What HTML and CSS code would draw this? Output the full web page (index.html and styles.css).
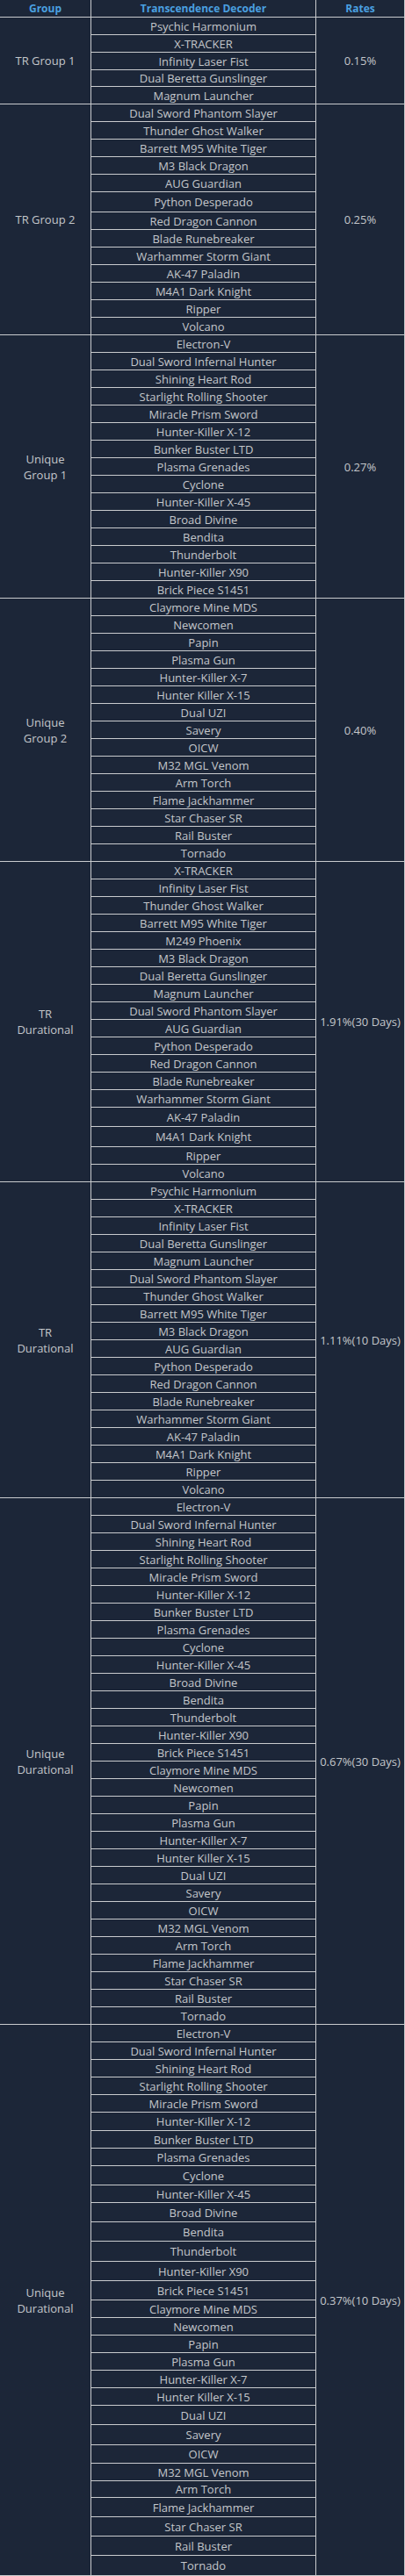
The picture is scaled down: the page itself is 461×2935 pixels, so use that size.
FILE: index.html
```html
<!DOCTYPE html>
<html lang="en">
<head>
<meta charset="utf-8">
<title>Transcendence Decoder Rates</title>
<link rel="stylesheet" href="styles.css">
</head>
<body>
<table class="rates">
  <thead>
    <tr class="head">
      <th class="c-group">Group</th>
      <th class="c-item">Transcendence Decoder</th>
      <th class="c-rate">Rates</th>
    </tr>
  </thead>
  <tbody>
    <tr><td class="grp" rowspan="5">TR Group 1</td><td>Psychic Harmonium</td><td class="rate" rowspan="5">0.15%</td></tr>
    <tr><td>X-TRACKER</td></tr>
    <tr><td>Infinity Laser Fist</td></tr>
    <tr class="r19"><td>Dual Beretta Gunslinger</td></tr>
    <tr><td>Magnum Launcher</td></tr>

    <tr><td class="grp" rowspan="13">TR Group 2</td><td>Dual Sword Phantom Slayer</td><td class="rate" rowspan="13">0.25%</td></tr>
    <tr><td>Thunder Ghost Walker</td></tr>
    <tr><td>Barrett M95 White Tiger</td></tr>
    <tr><td>M3 Black Dragon</td></tr>
    <tr><td>AUG Guardian</td></tr>
    <tr class="r23"><td>Python Desperado</td></tr>
    <tr><td>Red Dragon Cannon</td></tr>
    <tr><td>Blade Runebreaker</td></tr>
    <tr><td>Warhammer Storm Giant</td></tr>
    <tr><td>AK-47 Paladin</td></tr>
    <tr><td>M4A1 Dark Knight</td></tr>
    <tr><td>Ripper</td></tr>
    <tr><td>Volcano</td></tr>

    <tr><td class="grp" rowspan="15">Unique<br>Group 1</td><td>Electron-V</td><td class="rate" rowspan="15">0.27%</td></tr>
    <tr><td>Dual Sword Infernal Hunter</td></tr>
    <tr><td>Shining Heart Rod</td></tr>
    <tr><td>Starlight Rolling Shooter</td></tr>
    <tr><td>Miracle Prism Sword</td></tr>
    <tr><td>Hunter-Killer X-12</td></tr>
    <tr><td>Bunker Buster LTD</td></tr>
    <tr><td>Plasma Grenades</td></tr>
    <tr><td>Cyclone</td></tr>
    <tr><td>Hunter-Killer X-45</td></tr>
    <tr><td>Broad Divine</td></tr>
    <tr><td>Bendita</td></tr>
    <tr><td>Thunderbolt</td></tr>
    <tr><td>Hunter-Killer X90</td></tr>
    <tr><td>Brick Piece S1451</td></tr>

    <tr><td class="grp" rowspan="15">Unique<br>Group 2</td><td>Claymore Mine MDS</td><td class="rate" rowspan="15">0.40%</td></tr>
    <tr><td>Newcomen</td></tr>
    <tr><td>Papin</td></tr>
    <tr><td>Plasma Gun</td></tr>
    <tr><td>Hunter-Killer X-7</td></tr>
    <tr><td>Hunter Killer X-15</td></tr>
    <tr><td>Dual UZI</td></tr>
    <tr><td>Savery</td></tr>
    <tr><td>OICW</td></tr>
    <tr><td>M32 MGL Venom</td></tr>
    <tr><td>Arm Torch</td></tr>
    <tr><td>Flame Jackhammer</td></tr>
    <tr><td>Star Chaser SR</td></tr>
    <tr><td>Rail Buster</td></tr>
    <tr><td>Tornado</td></tr>

    <tr><td class="grp" rowspan="18">TR<br>Durational</td><td>X-TRACKER</td><td class="rate" rowspan="18">1.91%(30 Days)</td></tr>
    <tr><td>Infinity Laser Fist</td></tr>
    <tr><td>Thunder Ghost Walker</td></tr>
    <tr><td>Barrett M95 White Tiger</td></tr>
    <tr><td>M249 Phoenix</td></tr>
    <tr><td>M3 Black Dragon</td></tr>
    <tr><td>Dual Beretta Gunslinger</td></tr>
    <tr><td>Magnum Launcher</td></tr>
    <tr><td>Dual Sword Phantom Slayer</td></tr>
    <tr><td>AUG Guardian</td></tr>
    <tr><td>Python Desperado</td></tr>
    <tr><td>Red Dragon Cannon</td></tr>
    <tr><td>Blade Runebreaker</td></tr>
    <tr><td>Warhammer Storm Giant</td></tr>
    <tr class="r22"><td>AK-47 Paladin</td></tr>
    <tr class="r23"><td>M4A1 Dark Knight</td></tr>
    <tr><td>Ripper</td></tr>
    <tr><td>Volcano</td></tr>

    <tr><td class="grp" rowspan="18">TR<br>Durational</td><td>Psychic Harmonium</td><td class="rate" rowspan="18">1.11%(10 Days)</td></tr>
    <tr><td>X-TRACKER</td></tr>
    <tr><td>Infinity Laser Fist</td></tr>
    <tr><td>Dual Beretta Gunslinger</td></tr>
    <tr><td>Magnum Launcher</td></tr>
    <tr><td>Dual Sword Phantom Slayer</td></tr>
    <tr><td>Thunder Ghost Walker</td></tr>
    <tr><td>Barrett M95 White Tiger</td></tr>
    <tr><td>M3 Black Dragon</td></tr>
    <tr><td>AUG Guardian</td></tr>
    <tr><td>Python Desperado</td></tr>
    <tr><td>Red Dragon Cannon</td></tr>
    <tr><td>Blade Runebreaker</td></tr>
    <tr><td>Warhammer Storm Giant</td></tr>
    <tr><td>AK-47 Paladin</td></tr>
    <tr><td>M4A1 Dark Knight</td></tr>
    <tr><td>Ripper</td></tr>
    <tr><td>Volcano</td></tr>

    <tr><td class="grp" rowspan="30">Unique<br>Durational</td><td>Electron-V</td><td class="rate" rowspan="30">0.67%(30 Days)</td></tr>
    <tr><td>Dual Sword Infernal Hunter</td></tr>
    <tr><td>Shining Heart Rod</td></tr>
    <tr><td>Starlight Rolling Shooter</td></tr>
    <tr><td>Miracle Prism Sword</td></tr>
    <tr><td>Hunter-Killer X-12</td></tr>
    <tr><td>Bunker Buster LTD</td></tr>
    <tr><td>Plasma Grenades</td></tr>
    <tr><td>Cyclone</td></tr>
    <tr><td>Hunter-Killer X-45</td></tr>
    <tr><td>Broad Divine</td></tr>
    <tr><td>Bendita</td></tr>
    <tr><td>Thunderbolt</td></tr>
    <tr><td>Hunter-Killer X90</td></tr>
    <tr><td>Brick Piece S1451</td></tr>
    <tr><td>Claymore Mine MDS</td></tr>
    <tr><td>Newcomen</td></tr>
    <tr><td>Papin</td></tr>
    <tr><td>Plasma Gun</td></tr>
    <tr><td>Hunter-Killer X-7</td></tr>
    <tr><td>Hunter Killer X-15</td></tr>
    <tr><td>Dual UZI</td></tr>
    <tr><td>Savery</td></tr>
    <tr><td>OICW</td></tr>
    <tr><td>M32 MGL Venom</td></tr>
    <tr><td>Arm Torch</td></tr>
    <tr><td>Flame Jackhammer</td></tr>
    <tr><td>Star Chaser SR</td></tr>
    <tr><td>Rail Buster</td></tr>
    <tr><td>Tornado</td></tr>

    <tr><td class="grp" rowspan="30">Unique<br>Durational</td><td>Electron-V</td><td class="rate" rowspan="30">0.37%(10 Days)</td></tr>
    <tr><td>Dual Sword Infernal Hunter</td></tr>
    <tr><td>Shining Heart Rod</td></tr>
    <tr><td>Starlight Rolling Shooter</td></tr>
    <tr><td>Miracle Prism Sword</td></tr>
    <tr class="r21"><td>Hunter-Killer X-12</td></tr>
    <tr><td>Bunker Buster LTD</td></tr>
    <tr><td>Plasma Grenades</td></tr>
    <tr class="r22"><td>Cyclone</td></tr>
    <tr><td>Hunter-Killer X-45</td></tr>
    <tr class="r22"><td>Broad Divine</td></tr>
    <tr class="r22"><td>Bendita</td></tr>
    <tr class="r23"><td>Thunderbolt</td></tr>
    <tr class="r22"><td>Hunter-Killer X90</td></tr>
    <tr class="r22"><td>Brick Piece S1451</td></tr>
    <tr><td>Claymore Mine MDS</td></tr>
    <tr><td>Newcomen</td></tr>
    <tr><td>Papin</td></tr>
    <tr><td>Plasma Gun</td></tr>
    <tr><td>Hunter-Killer X-7</td></tr>
    <tr><td>Hunter Killer X-15</td></tr>
    <tr class="r22"><td>Dual UZI</td></tr>
    <tr class="r23"><td>Savery</td></tr>
    <tr class="r21"><td>OICW</td></tr>
    <tr><td>M32 MGL Venom</td></tr>
    <tr class="r19"><td>Arm Torch</td></tr>
    <tr class="r22"><td>Flame Jackhammer</td></tr>
    <tr class="r22"><td>Star Chaser SR</td></tr>
    <tr class="r22"><td>Rail Buster</td></tr>
    <tr class="r23"><td>Tornado</td></tr>
  </tbody>
</table>
</body>
</html>
```
FILE: styles.css
```css
html, body {
  margin: 0;
  padding: 0;
  background: #1c2638;
}

.rates {
  border-collapse: separate;
  border-spacing: 0;
  table-layout: fixed;
  width: 461px;
  background: #1c2638;
  font-family: "Open Sans", "Noto Sans", "Noto Sans CJK KR", sans-serif;
  font-size: 13px;
  line-height: 18px;
  color: #c4c7cb;
}

.rates th,
.rates td {
  box-sizing: border-box;
  padding: 0;
  text-align: center;
  vertical-align: middle;
  border-right: 1px solid #c9cbce;
  border-bottom: 1px solid #c9cbce;
  white-space: nowrap;
}

.rates th {
  color: #4aa0e0;
  font-size: 12px;
  font-weight: 700;
}

.rates .c-group { width: 104px; }
.rates .c-item { width: 256px; }
.rates .c-rate { width: 101px; }

.rates tr { height: 20px; }
.rates tr.r19 { height: 19px; }
.rates tr.r21 { height: 21px; }
.rates tr.r22 { height: 22px; }
.rates tr.r23 { height: 23px; }
```
